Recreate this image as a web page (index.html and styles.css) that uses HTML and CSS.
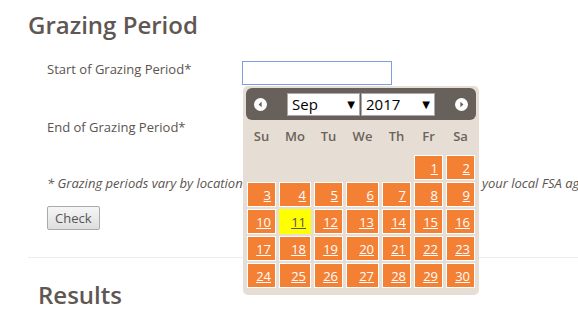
FILE: index.html
```
<!DOCTYPE html>
<html lang="en">
<head>
  <meta charset="UTF-8">
  <title>Grazing Period</title>
  <link rel="stylesheet" href="styles.css">
</head>
<body>
  <div class="page">
    <h2 class="section-title">Grazing Period</h2>

    <div class="form">
      <div class="form-row">
        <label class="form-label" for="startDate">Start of Grazing Period*</label>
        <input type="text" id="startDate" class="date-input focused">
      </div>
      <div class="form-row">
        <label class="form-label" for="endDate">End of Grazing Period*</label>
      </div>
      <p class="note">* Grazing periods vary by location and year.&nbsp; Please consult personally with your local FSA agent.</p>
      <button class="check-btn">Check</button>
    </div>

    <hr class="divider">
    <h2 class="results-title">Results</h2>
  </div>

  <div class="datepicker">
    <div class="dp-header">
      <span class="dp-nav">
        <svg width="13" height="13" viewBox="0 0 13 13"><circle cx="6.5" cy="6.5" r="6.5" fill="#fff"/><path d="M7.6 3.8 L4.6 6.5 L7.6 9.2 Z" fill="#67605b"/></svg>
      </span>
      <div class="dp-selects">
        <span class="dp-select month">Sep<span class="caret">&#9660;</span></span>
        <span class="dp-select year">2017<span class="caret">&#9660;</span></span>
      </div>
      <span class="dp-nav">
        <svg width="13" height="13" viewBox="0 0 13 13"><circle cx="6.5" cy="6.5" r="6.5" fill="#fff"/><path d="M5.4 3.8 L8.4 6.5 L5.4 9.2 Z" fill="#67605b"/></svg>
      </span>
    </div>
    <div class="dp-grid" id="dpGrid">
      <div class="dp-dow">Su</div>
      <div class="dp-dow">Mo</div>
      <div class="dp-dow">Tu</div>
      <div class="dp-dow">We</div>
      <div class="dp-dow">Th</div>
      <div class="dp-dow">Fr</div>
      <div class="dp-dow">Sa</div>
    </div>
  </div>

  <script>
    // September 2017 starts on a Friday
    const grid = document.getElementById("dpGrid");
    const firstDay = 5;
    const days = 30;
    const today = 11;

    for (let i = 0; i < firstDay; i++) {
      const blank = document.createElement("div");
      blank.className = "dp-blank";
      grid.appendChild(blank);
    }
    for (let d = 1; d <= days; d++) {
      const cell = document.createElement("a");
      cell.className = "dp-day" + (d === today ? " today" : "");
      cell.href = "#";
      cell.innerText = d;
      grid.appendChild(cell);
    }
  </script>
</body>
</html>
```

FILE: styles.css
```
body {
  margin: 0;
  font-family: "Open Sans", "DejaVu Sans", sans-serif;
  font-size: 13px;
  color: #5b5450;
  background-color: white;
  overflow: hidden;
}
.page {
  padding-left: 28px;
}
.section-title {
  margin: 0;
  padding-top: 8px;
  font-size: 24px;
  font-weight: 600;
  line-height: 33px;
  color: #5f5753;
}
.form {
  padding-left: 19px;
  margin-top: 18px;
}
.form-row {
  display: flex;
  align-items: center;
  height: 24px;
  margin-bottom: 34px;
}
.form-label {
  width: 195px;
  margin-top: -5px;
}
.date-input {
  width: 150px;
  height: 24px;
  box-sizing: border-box;
  border: 1px solid #ccc;
  padding: 2px 4px;
  font-family: inherit;
  font-size: 13px;
  margin-top: 4px;
}
.date-input.focused {
  border-color: #7b9fe0;
  outline: none;
}
.note {
  margin: -1px 0 0 0;
  font-style: italic;
  line-height: 18px;
  color: #5b5450;
  white-space: nowrap;
}
.check-btn {
  margin-top: 14px;
  height: 24px;
  padding: 0 7px;
  font-family: inherit;
  font-size: 13px;
  color: #555;
  background: linear-gradient(#f6f6f6, #dedede);
  border: 1px solid #aaa;
  border-radius: 2px;
}
.divider {
  border: none;
  border-top: 1px solid #ececec;
  margin: 27px 0 0 0;
}
.results-title {
  margin: 0;
  padding-left: 10px;
  padding-top: 20px;
  font-size: 24px;
  font-weight: 600;
  line-height: 33px;
  color: #5f5753;
}

/* datepicker popup */
.datepicker {
  position: absolute;
  left: 243px;
  top: 86px;
  width: 236px;
  height: 209px;
  box-sizing: border-box;
  padding: 2px 3px;
  background-color: #e6ded4;
  border-radius: 5px;
}
.dp-header {
  display: flex;
  align-items: center;
  justify-content: space-between;
  height: 32px;
  padding: 0 8px;
  background-color: #67605b;
  border-radius: 6px;
}
.dp-nav {
  display: flex;
}
.dp-selects {
  display: flex;
  gap: 1px;
}
.dp-select {
  display: flex;
  align-items: center;
  justify-content: space-between;
  height: 23px;
  box-sizing: border-box;
  padding: 0 4px 0 4px;
  background-color: white;
  border: 1px solid #a9a9a9;
  font-size: 15px;
  color: black;
}
.dp-select.month {
  width: 73px;
}
.dp-select.year {
  width: 74px;
}
.caret {
  font-size: 10px;
}
.dp-grid {
  display: grid;
  grid-template-columns: 29px 32px 29px 33px 29px 29px 29px;
  grid-template-rows: 33px;
  grid-auto-rows: 25px;
  column-gap: 3px;
  row-gap: 2px;
  padding-left: 1px;
}
.dp-dow {
  align-self: center;
  text-align: center;
  font-weight: 600;
  color: #6b625c;
  padding-bottom: 2px;
}
.dp-day {
  display: block;
  box-sizing: border-box;
  border: 1px solid white;
  background-color: #f48034;
  color: white;
  text-align: right;
  padding: 3px 4px 0 0;
  line-height: 18px;
  font-size: 13px;
  text-decoration: underline;
}
.dp-day.today {
  background-color: #ffff00;
  border-color: #ffff00;
  color: #555;
}
```
